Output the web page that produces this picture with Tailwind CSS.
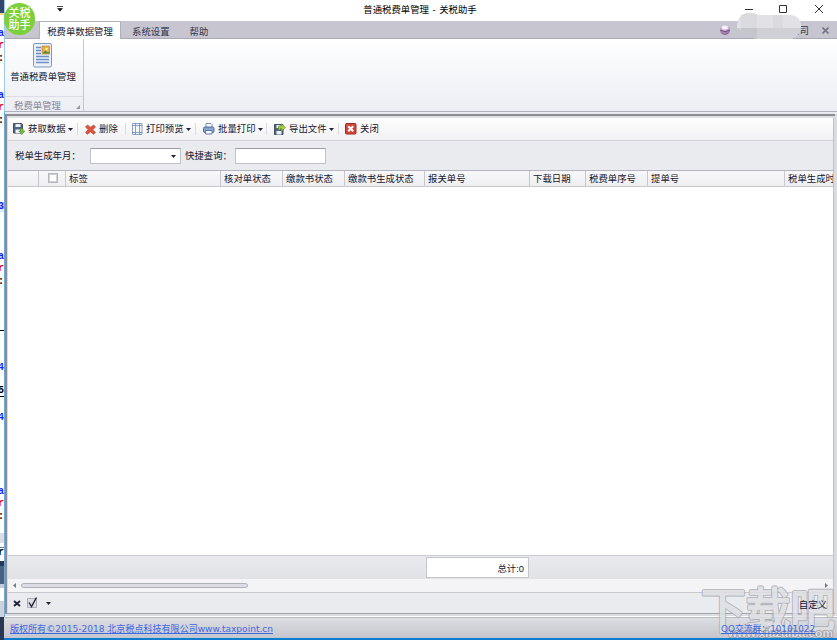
<!DOCTYPE html>
<html lang="zh-CN">
<head>
  <meta charset="UTF-8">
  <meta name="viewport" content="width=device-width, initial-scale=1.0">
  <script src="https://cdn.jsdelivr.net/npm/@tailwindcss/browser@4"></script>
  <title>普通税费单管理 - 关税助手</title>
</head>

<body class="relative flex w-[837px] h-[640px] overflow-hidden bg-white font-['Liberation_Sans','Noto_Sans_CJK_SC',sans-serif] text-[9.4px] leading-none text-[#16162e] whitespace-nowrap">

  <!-- editor window behind -->
  <aside class="relative w-1 h-full shrink-0 overflow-hidden bg-white font-['Liberation_Mono',monospace] text-[10px] font-bold text-[#2020ff]">
    <div class="h-[13px] bg-[#34466a]"></div>
    <div class="h-[2px] bg-[#f5dc8b]"></div>
    <span class="absolute -left-[2px] top-[29px]">a</span>
    <span class="absolute -left-[2px] top-[41px] text-red-600">r</span>
    <span class="absolute -left-[2px] top-[54px] text-black">:</span>
    <span class="absolute -left-[2px] top-[91px]">a</span>
    <span class="absolute -left-[2px] top-[103px] text-red-600">r</span>
    <span class="absolute -left-[2px] top-[116px] text-black">:</span>
    <span class="absolute -left-[2px] top-[202px] bg-[#dfe6f5]">3</span>
    <span class="absolute -left-[2px] top-[252px]">a</span>
    <span class="absolute -left-[2px] top-[264px] text-red-600">r</span>
    <span class="absolute -left-[2px] top-[277px] text-black">:</span>
    <span class="absolute left-0 top-[330px] w-1 h-px bg-black"></span>
    <span class="absolute -left-[2px] top-[363px]">4</span>
    <span class="absolute -left-[2px] top-[386px] text-black">5</span>
    <span class="absolute left-0 top-[396px] w-1 h-px bg-black"></span>
    <span class="absolute -left-[2px] top-[413px]">4</span>
    <span class="absolute -left-[2px] top-[487px]">a</span>
    <span class="absolute -left-[2px] top-[499px] text-red-600">r</span>
    <span class="absolute -left-[2px] top-[512px] text-black">:</span>
    <span class="absolute left-0 top-[533px] w-1 h-[10px] bg-[#dcdce2]"></span>
    <span class="absolute left-0 top-[547px] w-1 h-px bg-[#777]"></span>
    <span class="absolute -left-[2px] top-[548px] text-black">r</span>
    <span class="absolute left-0 top-[561px] w-1 h-[5px] bg-[#293955]"></span>
    <span class="absolute left-0 top-[566px] w-1 h-[18px] bg-[#4d6082]"></span>
    <span class="absolute left-0 top-[584px] w-1 h-[4px] bg-[#c5cad5]"></span>
    <span class="absolute left-0 top-[601px] w-1 h-[16px] bg-[#cfd2da]"></span>
    <span class="absolute left-0 top-[617px] w-1 h-[23px] bg-[#293955]"></span>
  </aside>

  <main class="relative flex flex-col w-[833px] h-full shrink-0">
    <!-- title bar -->
    <header class="relative flex h-[21px] shrink-0 items-start justify-center bg-white border-l border-[#9fc9ea]">
      <svg class="absolute left-[52px] top-[6px]" width="6" height="6"><path d="M0 .5h6M.7 2.5h4.6L3 5.2z" fill="#222" stroke="#222" stroke-width=".8"/></svg>
      <h1 class="mt-[4px] -ml-[2px] text-[9.4px] leading-[11px] text-black">普通税费单管理 <span class="mx-px">-</span> 关税助手</h1>
      <svg class="absolute left-[739px] top-0" width="92" height="18" fill="none" stroke="#333"><path d="M1 9.500h8M35.500 5.500h7v7h-7zM71 5l8 8M79 5l-8 8"/></svg>
    </header>

    <!-- tabs -->
    <nav class="flex h-[18px] shrink-0 bg-[#c7c6d0] border-b border-[#a6a8b5] border-l border-l-[#9fc9ea] text-[#33334a]">
      <div class="ml-[34px] w-[82px] h-[18px] bg-white border-x border-t border-[#aeb0bc] pt-[5px] text-center text-[#16162e]">税费单数据管理</div>
      <div class="ml-[11px] mt-[6px]">系统设置</div>
      <div class="ml-[20px] mt-[6px]">帮助</div>
      <div class="ml-auto mt-[4px] mr-[8px] flex">
        <svg class="-mt-px mr-[66px]" width="12" height="12">
          <defs><radialGradient id="orb" cx=".45" cy=".25" r=".8"><stop offset="0" stop-color="#f3e8f5"/><stop offset=".5" stop-color="#b99bc1"/><stop offset="1" stop-color="#7e5588"/></radialGradient></defs>
          <circle cx="7" cy="6" r="5" fill="url(#orb)"/><path d="M2.500 6.500q4.500 2 9 0" stroke="#71457e" fill="none"/><ellipse cx="7" cy="3.500" rx="3.500" ry="2" fill="#fff" opacity=".7"/>
        </svg>
        <span class="mt-px mr-[13px] w-[13px] flex justify-end overflow-hidden">公司</span>
        <svg class="mt-[2px]" width="7" height="7" stroke="#74748a" stroke-width="1.600"><path d="M.5.500l6 6M6.500.500l-6 6"/></svg>
      </div>
    </nav>

    <!-- ribbon -->
    <section class="flex h-[72px] shrink-0 bg-gradient-to-b from-white to-[#eceef4] border-l border-[#9fc9ea]">
      <div class="flex flex-col items-center w-[79px] h-full border-r border-[#c5c6d0]">
        <svg class="mt-[4px] -ml-[3px]" width="20" height="25">
          <rect x=".5" y=".5" width="18" height="23.500" rx="1.500" fill="#e9f0fa" stroke="#8197b6"/>
          <path d="M3 4.500h5M3 7.500h5M3 10.500h5M3 13.500h13M3 16.500h13M3 19.500h13" stroke="#6d8fc1" stroke-width="1.400"/>
          <rect x="9" y="3" width="7.500" height="8" fill="#e8ae43" stroke="#bd8737" stroke-width=".7"/>
          <path d="M9.500 10.500l3-3 2 2 2-1v2z" fill="#4a8a45"/><circle cx="13.500" cy="6" r="1.300" fill="#fff0a8"/>
        </svg>
        <span class="mt-[4px] -ml-[2px]">普通税费单管理</span>
        <div class="mt-auto w-full h-[15px] border-t border-[#dddee5] pt-[4px] pl-[9px] pr-[3px] flex justify-between text-[#85859a]">
          税费单管理
          <svg class="mt-[4px]" width="4" height="4"><path d="M4 0v4H0z" fill="#9697a4"/></svg>
        </div>
      </div>
    </section>

    <!-- document frame -->
    <section class="flex flex-col h-[506px] shrink-0 border-t border-[#afb2bb] bg-[#dadce2] border-l border-l-[#69acdc]">
      <div class="h-[2px] shrink-0 bg-[#e9ebf0]"></div>
      <div class="flex flex-col h-[500px] w-[830px] shrink-0 border-t-2 border-l-2 border-[#8c8c92] border-b border-b-[#a3a5b1]">
        <div class="h-[2px] shrink-0 bg-[#dfe0e5]"></div>
        <div class="flex flex-col w-[826px] h-[495px] ml-px border-r border-[#bfc1ca] bg-white">

          <!-- toolbar -->
          <div class="flex h-[23px] shrink-0 items-center bg-gradient-to-b from-white to-[#f1f1f4] border-b border-[#d1d2d8]">
            <div class="flex items-center w-[70px] h-3 pl-[5px] border-r border-[#dcdde2]">
              <svg class="mr-[3px]" width="12" height="12"><path d="M.5.500h8l1 1v8.500h-9z" fill="#526580" stroke="#3d4f69"/><path d="M2.500 1h5v3h-5zM2.500 6.500h5v3.500h-5z" fill="#eef3f8"/><path d="M7.500 5.500h2.500v2.500h1.800L8.800 11.500 5.800 8h1.700z" fill="#79bd43" stroke="#478425" stroke-width=".6"/></svg>
              获取数据
              <svg class="ml-[2px]" width="5" height="3"><path d="M0 0h5L2.500 3z" fill="#22223c"/></svg>
            </div>
            <div class="flex items-center w-[48px] h-3 pl-[7px] border-r border-[#dcdde2]">
              <svg class="mr-[3px]" width="11" height="11"><path d="M2.500 1L5.500 3.500 8.500 1l2 2-2.800 2.700L10.500 8.500l-2 1.800L5.500 7.700 2.500 10.300.500 8.500l2.800-2.800L.5 3z" fill="#e2553d" stroke="#b83b29" stroke-width=".7"/></svg>
              删除
            </div>
            <div class="flex items-center w-[70px] h-3 pl-[6px] border-r border-[#dcdde2]">
              <svg class="mr-[3px]" width="11" height="12"><path d="M.5.500h9.500v11H.5z" fill="#f2f6fc" stroke="#91a3c3"/><path d="M3.500 0v12M7.500 0v12M0 2.500h10.500M0 9.500h10.500" stroke="#6f8cba" stroke-width=".8"/></svg>
              打印预览
              <svg class="ml-[2px]" width="5" height="3"><path d="M0 0h5L2.500 3z" fill="#22223c"/></svg>
            </div>
            <div class="flex items-center w-[71px] h-3 pl-[7px] border-r border-[#dcdde2]">
              <svg class="mr-[3px]" width="12" height="12"><path d="M3 .5h5l1 1V5H3z" fill="#fff" stroke="#7491b9"/><rect x=".5" y="4" width="10.500" height="5.500" rx="1.500" fill="#86a5cf" stroke="#4f6d9b"/><path d="M2.500 7.500h6.500v3.500H2.500z" fill="#fff" stroke="#5d7ba8"/></svg>
              批量打印
              <svg class="ml-[2px]" width="5" height="3"><path d="M0 0h5L2.500 3z" fill="#22223c"/></svg>
            </div>
            <div class="flex items-center w-[72px] h-3 pl-[7px] border-r border-[#dcdde2]">
              <svg class="mr-[3px]" width="12" height="12"><path d="M.5 1.500h8.500v10H.5z" fill="#526580" stroke="#3d4f69"/><path d="M2.500 2h4v3h-4zM2.500 8h5v3.500h-5z" fill="#eef3f8"/><path d="M4.500 7V3h3V.7L11.500 4.500 7.500 8V5.700H6V7z" fill="#a6ce39" stroke="#60912a" stroke-width=".6"/></svg>
              导出文件
              <svg class="ml-[2px]" width="5" height="3"><path d="M0 0h5L2.500 3z" fill="#22223c"/></svg>
            </div>
            <div class="flex items-center h-3 pl-[6px]">
              <svg class="mr-[3px]" width="12" height="12"><rect x=".5" y=".5" width="10.500" height="10.500" rx="1" fill="#d5453c" stroke="#9c2c28"/><path d="M3.200 3.200l5 5M8.200 3.200l-5 5" stroke="#fff" stroke-width="2"/></svg>
              关闭
            </div>
          </div>

          <!-- query row -->
          <div class="flex h-[29px] shrink-0 items-center bg-[#eaebef] pt-px">
            <label class="ml-[7px] w-[75px]">税单生成年月：</label>
            <div class="flex items-center justify-end w-[91px] h-4 bg-white border border-[#c0c2cb] border-t-[#9a9ca8] pr-[4px]">
              <svg width="5" height="3"><path d="M0 0h5L2.500 3z" fill="#22223c"/></svg>
            </div>
            <label class="ml-[4px] w-[50px]">快捷查询：</label>
            <div class="w-[91px] h-4 bg-white border border-[#c0c2cb] border-t-[#9a9ca8]"></div>
          </div>

          <!-- grid header -->
          <div class="grid grid-cols-[31px_27px_155px_62px_62px_80px_105px_56px_62px_137px_48px] h-[17px] shrink-0 overflow-hidden bg-gradient-to-b from-[#f8f8fa] to-[#eeeff2] border-y border-[#c6c7cf] border-t-[#b3b5c0] *:border-r *:border-[#c6c7cf] *:pl-[3px] *:pt-[3px] *:overflow-hidden">
            <div></div>
            <div><div class="ml-[6px] -mt-px w-[10px] h-[10px] bg-white border-2 border-[#cfd0d6] outline outline-[#b5b7c2] -outline-offset-1"></div></div>
            <div>标签</div>
            <div>核对单状态</div>
            <div>缴款书状态</div>
            <div>缴款书生成状态</div>
            <div>报关单号</div>
            <div>下载日期</div>
            <div>税费单序号</div>
            <div>提单号</div>
            <div class="border-r-0!">税单生成时间</div>
          </div>

          <div class="h-[368px] shrink-0 bg-white"></div>

          <!-- summary -->
          <div class="flex h-[24px] shrink-0 border-t border-[#cbccd3] bg-gradient-to-b from-[#eaebee] to-[#e1e2e6]">
            <div class="ml-[418px] mt-px w-[103px] h-[21px] bg-white border border-[#c4c6cd] pt-[6px] pr-[4px] text-right">总计:0</div>
          </div>

          <!-- horizontal scroll -->
          <div class="flex h-[13px] shrink-0 items-center bg-[#f4f4f7] px-[5px]">
            <svg width="3" height="5"><path d="M3 0v5L0 2.500z" fill="#777989"/></svg>
            <div class="ml-[5px] w-[227px] h-[5px] rounded-full border border-[#aeb0ba] bg-[#dcdde3]"></div>
            <svg class="ml-auto" width="3" height="5"><path d="M0 0v5l3-2.500z" fill="#777989"/></svg>
          </div>

          <!-- filter bar -->
          <div class="flex h-[21px] shrink-0 items-center bg-[#eaebef] border-t border-[#c9cad1] pl-[5px] pr-[6px]">
            <svg width="8" height="7" stroke="#22223c" stroke-width="1.900"><path d="M1 1l6 5M7 1L1 6"/></svg>
            <svg class="ml-[6px]" width="11" height="12"><path d="M.5 1.500h9v9h-9z" fill="#dddee3" stroke="#a9abb5"/><path d="M2 5.500l2.500 4L9.500.500" fill="none" stroke="#22223c" stroke-width="1.400"/></svg>
            <svg class="ml-[8px] mt-px" width="5" height="3"><path d="M0 0h5L2.500 3z" fill="#22223c"/></svg>
            <span class="relative z-10 ml-auto mt-[3px]">自定义</span>
          </div>
        </div>
      </div>
      <div class="h-[2px] shrink-0 bg-[#dcdde2]"></div>
      <div class="h-px shrink-0 bg-white"></div>
    </section>

    <!-- status bar -->
    <footer class="flex h-[21px] shrink-0 justify-between items-center bg-gradient-to-b from-[#dddee3] to-[#c5c6cd] border-t border-[#b9bac2] pl-[6px] pr-[21px]">
      <svg width="264" height="14"><text x="0" y="10.500" textLength="263" lengthAdjust="spacingAndGlyphs" fill="#4169e1" font-size="9.500" font-family="DejaVu Sans, Noto Sans CJK SC, sans-serif">版权所有©2015-2018 北京税点科技有限公司www.taxpoint.cn</text><path d="M0 12.500h263" stroke="#4169e1"/></svg>
      <svg class="relative z-10" width="95" height="14"><text x="0" y="10.500" textLength="94" lengthAdjust="spacingAndGlyphs" fill="#4169e1" font-size="9.500" font-family="DejaVu Sans, Noto Sans CJK SC, sans-serif">QQ交流群：10101022</text><path d="M0 12.500h94" stroke="#4169e1"/></svg>
    </footer>
    <div class="h-[2px] shrink-0 bg-[#0c7ccf]"></div>

    <!-- logo badge over the tabs -->
    <div class="absolute left-0 top-[3px] flex flex-col items-center justify-center w-[31px] h-[32px] rounded-full bg-[#7cd03c] text-white font-medium text-[11px] leading-[12px]">
      <span>关税</span>
      <span>助手</span>
    </div>

    <!-- masked company name -->
    <svg class="absolute left-[728px] top-[13px]" width="74" height="28">
      <defs><clipPath id="mask"><path d="M5 15C5 5 9 0 17 0q6 0 9 2h32q9 0 11 9 1 9-6 13l-3 2H23l-5-3-13-8z"/></clipPath></defs>
      <g clip-path="url(#mask)">
        <path d="M0 0h74v15H0z" fill="#e2e2e6"/><path d="M0 15h74v13H0z" fill="#d0d0d7"/>
        <path d="M9 0h16v15H9zM41 0h10v15H41z" fill="#dadadf"/><path d="M9 15h16v13H9z" fill="#c5c5cc"/>
      </g>
    </svg>

    <!-- watermark, outer contour then lighter body -->
    <svg class="absolute left-[693px] top-[578px] pointer-events-none" width="140" height="62" font-family="Noto Sans CJK SC, sans-serif" stroke-linejoin="round">
      <g opacity=".85">
        <text x="4" y="50" font-size="48" textLength="134" lengthAdjust="spacingAndGlyphs" fill="#a6a7ae" stroke="#a6a7ae" stroke-width="3.600">下载吧</text>
        <text x="4" y="50" font-size="48" textLength="134" lengthAdjust="spacingAndGlyphs" fill="#dfe0e4" stroke="#dfe0e4" stroke-width="1.800">下载吧</text>
      </g>
      <text x="31" y="59" font-size="11" font-weight="bold" font-family="Liberation Sans, sans-serif" textLength="105" lengthAdjust="spacingAndGlyphs" fill="#dcdde1" stroke="#96979f" stroke-width="1.400" paint-order="stroke">www.xiazaiba.com</text>
    </svg>
  </main>
</body>
</html>
